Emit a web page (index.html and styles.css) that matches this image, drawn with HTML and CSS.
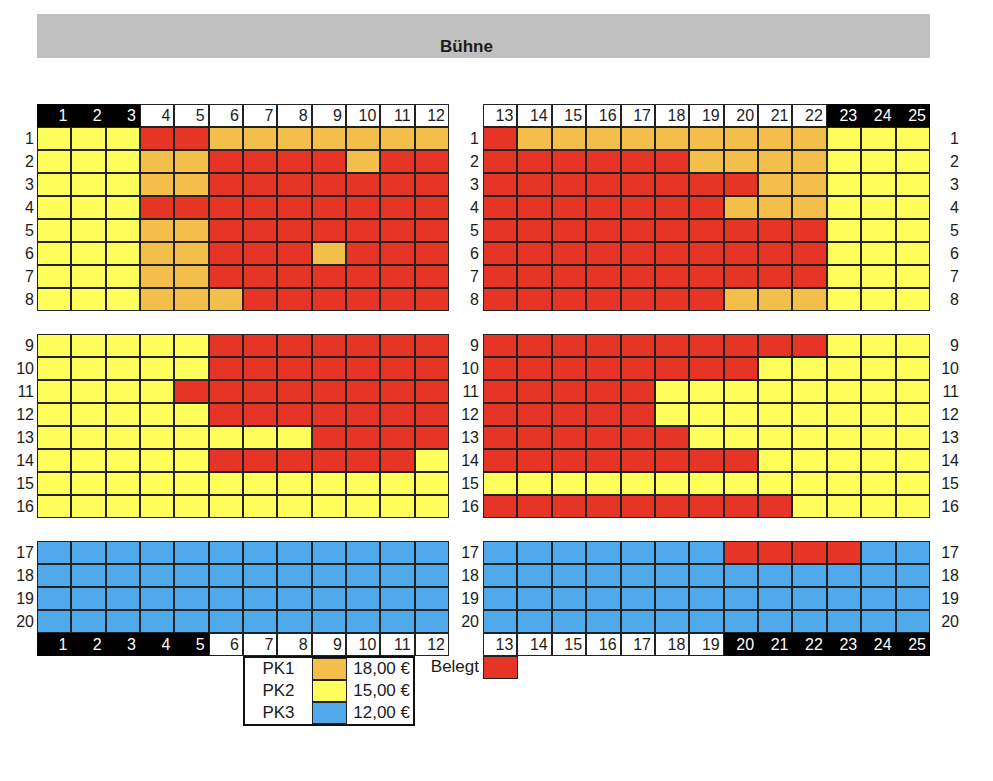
FILE: index.html
```html
<!DOCTYPE html>
<html lang="de">
<head>
<meta charset="utf-8">
<title>Saalplan</title>
<link rel="stylesheet" href="styles.css">
</head>
<body>
<div class="stage">Bühne</div>

<div class="section sec-top">
  <div class="labels labels-l"><div>1</div><div>2</div><div>3</div><div>4</div><div>5</div><div>6</div><div>7</div><div>8</div></div>
  <div class="block block-l" data-seats="yyyrrooooooo yyyoorrrrorr yyyoorrrrrrr yyyrrrrrrrrr yyyoorrrrrrr yyyoorrrorrr yyyoorrrrrrr yyyooorrrrrr">
    <div class="hd dark">1</div><div class="hd dark">2</div><div class="hd dark">3</div><div class="hd">4</div><div class="hd">5</div><div class="hd">6</div><div class="hd">7</div><div class="hd">8</div><div class="hd">9</div><div class="hd">10</div><div class="hd">11</div><div class="hd">12</div>
  </div>
  <div class="labels labels-m"><div>1</div><div>2</div><div>3</div><div>4</div><div>5</div><div>6</div><div>7</div><div>8</div></div>
  <div class="block block-r" data-seats="roooooooooyyy rrrrrrooooyyy rrrrrrrrooyyy rrrrrrroooyyy rrrrrrrrrryyy rrrrrrrrrryyy rrrrrrrrrryyy rrrrrrroooyyy">
    <div class="hd">13</div><div class="hd">14</div><div class="hd">15</div><div class="hd">16</div><div class="hd">17</div><div class="hd">18</div><div class="hd">19</div><div class="hd">20</div><div class="hd">21</div><div class="hd">22</div><div class="hd dark">23</div><div class="hd dark">24</div><div class="hd dark">25</div>
  </div>
  <div class="labels labels-r"><div>1</div><div>2</div><div>3</div><div>4</div><div>5</div><div>6</div><div>7</div><div>8</div></div>
</div>

<div class="section sec-mid">
  <div class="labels labels-l"><div>9</div><div>10</div><div>11</div><div>12</div><div>13</div><div>14</div><div>15</div><div>16</div></div>
  <div class="block block-l" data-seats="yyyyyrrrrrrr yyyyyrrrrrrr yyyyrrrrrrrr yyyyyrrrrrrr yyyyyyyyrrrr yyyyyrrrrrry yyyyyyyyyyyy yyyyyyyyyyyy"></div>
  <div class="labels labels-m"><div>9</div><div>10</div><div>11</div><div>12</div><div>13</div><div>14</div><div>15</div><div>16</div></div>
  <div class="block block-r" data-seats="rrrrrrrrrryyy rrrrrrrryyyyy rrrrryyyyyyyy rrrrryyyyyyyy rrrrrryyyyyyy rrrrrrrryyyyy yyyyyyyyyyyyy rrrrrrrrryyyy"></div>
  <div class="labels labels-r"><div>9</div><div>10</div><div>11</div><div>12</div><div>13</div><div>14</div><div>15</div><div>16</div></div>
</div>

<div class="section sec-bot">
  <div class="labels labels-l"><div>17</div><div>18</div><div>19</div><div>20</div></div>
  <div class="block block-l" data-pos="before" data-seats="bbbbbbbbbbbb bbbbbbbbbbbb bbbbbbbbbbbb bbbbbbbbbbbb">
    <div class="hd dark">1</div><div class="hd dark">2</div><div class="hd dark">3</div><div class="hd dark">4</div><div class="hd dark">5</div><div class="hd">6</div><div class="hd">7</div><div class="hd">8</div><div class="hd">9</div><div class="hd">10</div><div class="hd">11</div><div class="hd">12</div>
  </div>
  <div class="labels labels-m"><div>17</div><div>18</div><div>19</div><div>20</div></div>
  <div class="block block-r" data-pos="before" data-seats="bbbbbbbrrrrbb bbbbbbbbbbbbb bbbbbbbbbbbbb bbbbbbbbbbbbb">
    <div class="hd">13</div><div class="hd">14</div><div class="hd">15</div><div class="hd">16</div><div class="hd">17</div><div class="hd">18</div><div class="hd">19</div><div class="hd dark">20</div><div class="hd dark">21</div><div class="hd dark">22</div><div class="hd dark">23</div><div class="hd dark">24</div><div class="hd dark">25</div>
  </div>
  <div class="labels labels-r"><div>17</div><div>18</div><div>19</div><div>20</div></div>
</div>

<div class="legend-row">
  <div class="legend">
    <div class="pk">PK1</div><div class="sw o"></div><div class="price">18,00 €</div>
    <div class="pk">PK2</div><div class="sw y"></div><div class="price">15,00 €</div>
    <div class="pk">PK3</div><div class="sw b"></div><div class="price">12,00 €</div>
  </div>
  <div class="belegt-label">Belegt</div>
  <div class="belegt-sw r"></div>
</div>

<script src="script.js"></script>
</body>
</html>
```

FILE: styles.css
```css
body {
  margin: 0;
  background: #fff;
  color: #1c1c1c;
  font-family: "Liberation Sans", Arial, sans-serif;
}

.stage {
  box-sizing: border-box;
  margin: 14px 0 0 37px;
  width: 893px;
  height: 44px;
  padding: 0 34px 1px 0;
  background: #c0c0c0;
  display: flex;
  align-items: flex-end;
  justify-content: center;
  font-weight: bold;
  font-size: 17px;
  line-height: 20px;
}

.section {
  display: grid;
  grid-template-columns: 37px 412px 34px 447px 32px;
}

.sec-top { margin-top: 46px; }
.sec-mid { margin-top: 23px; }
.sec-bot { margin-top: 23px; }

.labels {
  box-sizing: border-box;
  display: grid;
  grid-auto-rows: 23px;
  align-content: start;
  font-size: 16px;
  line-height: 23px;
  text-align: right;
}

.labels-l { padding-right: 3px; }
.labels-m { padding-right: 4px; }
.labels-r { padding-right: 3px; }
.sec-top .labels { padding-top: 23px; }

.block {
  display: grid;
  grid-auto-rows: 23px;
}

.block-l { grid-template-columns: repeat(12, 1fr); }
.block-r { grid-template-columns: repeat(13, 1fr); }

.block > div {
  box-sizing: border-box;
  min-width: 0;
  border: 1px solid #222;
}

.hd {
  background: #fff;
  text-align: right;
  padding-right: 3px;
  font-size: 16px;
  line-height: 21px;
}

.hd.dark {
  background: #000;
  border-color: #000 !important;
  color: #fff;
}

.y { background: #ffff5b; }
.o { background: #f4be4a; }
.r { background: #e63426; }
.b { background: #4fa9ea; }

.legend-row {
  display: flex;
  align-items: flex-start;
  padding-left: 243px;
}

.legend {
  box-sizing: border-box;
  width: 172px;
  border: 2px solid #111;
  display: grid;
  grid-template-columns: 67px 35px 1fr;
  grid-auto-rows: 22px;
  font-size: 17px;
  line-height: 22px;
}

.pk { text-align: center; }

.sw {
  box-sizing: border-box;
  border: 1px solid #222;
}

.price {
  text-align: right;
  padding-right: 3px;
}

.belegt-label {
  box-sizing: border-box;
  width: 68px;
  padding-right: 4px;
  text-align: right;
  font-size: 17px;
  line-height: 22px;
}

.belegt-sw {
  box-sizing: border-box;
  width: 35px;
  height: 23px;
  border: 1px solid #222;
}
```

FILE: script.js
```js
document.querySelectorAll('.block[data-seats]').forEach(function (block) {
  var frag = document.createDocumentFragment();
  block.dataset.seats.split(' ').forEach(function (row) {
    for (var i = 0; i < row.length; i++) {
      var seat = document.createElement('div');
      seat.className = 'seat ' + row[i];
      frag.appendChild(seat);
    }
  });
  if (block.dataset.pos === 'before') {
    block.insertBefore(frag, block.firstChild);
  } else {
    block.appendChild(frag);
  }
});
```
